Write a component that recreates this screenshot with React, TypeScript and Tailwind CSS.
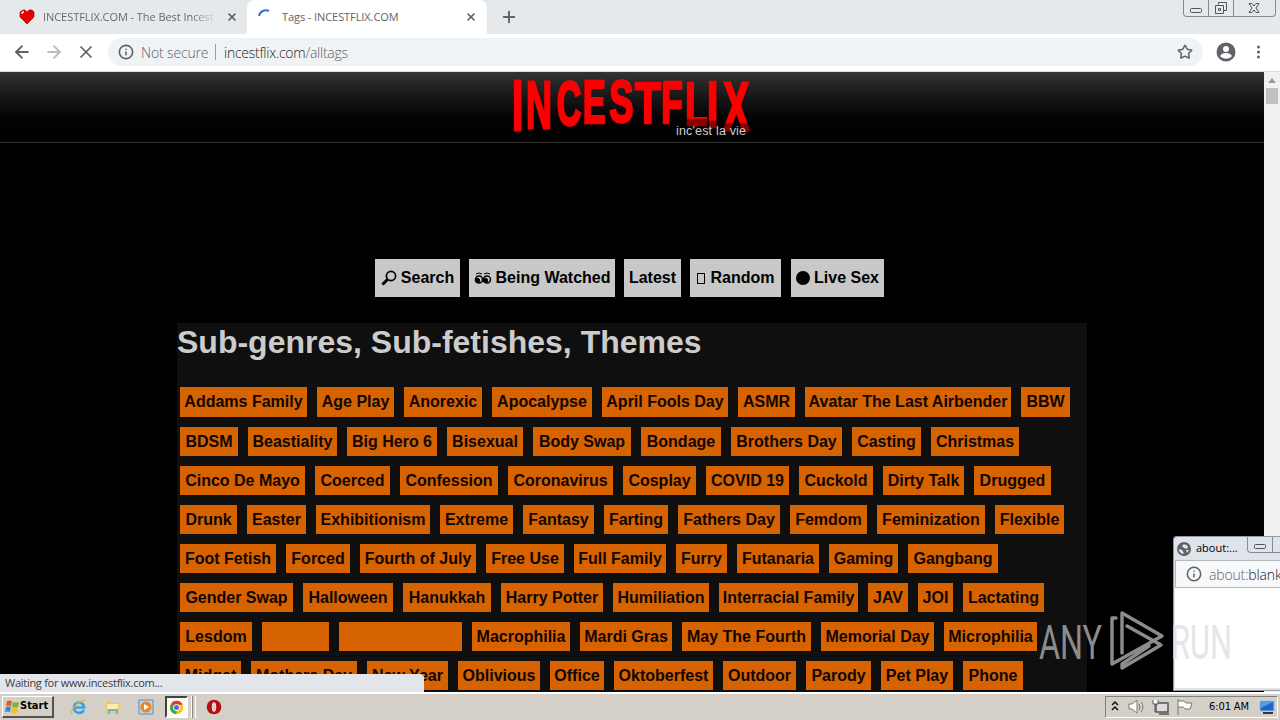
import type { ReactNode } from 'react';
import { ArrowLeft, ArrowRight, Info, Plus, Star, X } from 'lucide-react';
import { clsx } from 'clsx';

interface Tag {
  label: string;
  width: number;
}

const t = (label: string, width: number): Tag => ({ label, width });

const TAG_ROWS: Tag[][] = [
  [t('Addams Family', 127), t('Age Play', 77), t('Anorexic', 78), t('Apocalypse', 100), t('April Fools Day', 126), t('ASMR', 57), t('Avatar The Last Airbender', 206), t('BBW', 49)],
  [t('BDSM', 58), t('Beastiality', 89), t('Big Hero 6', 90), t('Bisexual', 76), t('Body Swap', 98), t('Bondage', 80), t('Brothers Day', 111), t('Casting', 69), t('Christmas', 88)],
  [t('Cinco De Mayo', 125), t('Coerced', 75), t('Confession', 98), t('Coronavirus', 105), t('Cosplay', 73), t('COVID 19', 83), t('Cuckold', 74), t('Dirty Talk', 81), t('Drugged', 77)],
  [t('Drunk', 57), t('Easter', 59), t('Exhibitionism', 114), t('Extreme', 73), t('Fantasy', 71), t('Farting', 64), t('Fathers Day', 102), t('Femdom', 77), t('Feminization', 108), t('Flexible', 69)],
  [t('Foot Fetish', 96), t('Forced', 64), t('Fourth of July', 116), t('Free Use', 78), t('Full Family', 92), t('Furry', 51), t('Futanaria', 82), t('Gaming', 69), t('Gangbang', 90)],
  [t('Gender Swap', 113), t('Halloween', 90), t('Hanukkah', 88), t('Harry Potter', 102), t('Humiliation', 96), t('Interracial Family', 139), t('JAV', 40), t('JOI', 35), t('Lactating', 81)],
  [t('Lesdom', 72), t('', 67), t('', 123), t('Macrophilia', 98), t('Mardi Gras', 92), t('May The Fourth', 129), t('Memorial Day', 113), t('Microphilia', 93)],
  [t('Midget', 61), t('Mothers Day', 106), t('New Year', 81), t('Oblivious', 82), t('Office', 54), t('Oktoberfest', 99), t('Outdoor', 73), t('Parody', 65), t('Pet Play', 72), t('Phone', 60)],
];

// x, baseline, horizontal scale, vertical scale
const LOGO: [string, number, number, number, number][] = [
  ['I', 512, 130, 0.68, 1.17],
  ['N', 526, 128, 0.6, 1.12],
  ['C', 556.5, 125, 0.56, 1.05],
  ['E', 582.5, 123, 0.57, 1.02],
  ['S', 609, 122, 0.6, 0.98],
  ['T', 635, 122.5, 0.7, 0.97],
  ['F', 661, 123, 0.58, 0.99],
  ['L', 685, 125, 0.6, 1.03],
  ['I', 707, 127, 0.68, 1.08],
  ['X', 723.5, 130, 0.64, 1.15],
];

function Heart() {
  return (
    <svg className="h-4 w-4 shrink-0" viewBox="0 0 16 16">
      <path d="M8 15 1 8V3l3-2h2l2 2 2-2h3l2 2v5z" fill="#e60000" stroke="#8b0000" strokeWidth=".6" />
      <path d="M3 5V4l1-1h1" fill="none" stroke="#fff" strokeWidth="1.3" />
    </svg>
  );
}

function TabStrip() {
  return (
    <div className="flex h-[34px] shrink-0 items-start bg-[#e5e9ec] text-[11px] text-[#5f6368]">
      <div className="flex h-full w-[247px] items-center pl-[19px]">
        <Heart />
        <span className="ml-2 w-[175px] overflow-hidden whitespace-nowrap bg-gradient-to-r from-[#5f6368] from-85% to-transparent bg-clip-text tracking-[-0.06px] text-transparent">
          INCESTFLIX.COM - The Best Incest P
        </span>
        <X className="ml-2 h-3 w-3" strokeWidth={3.4} />
      </div>
      <div className="flex h-full w-[240px] items-center rounded-t-lg bg-white pl-[11px]">
        <svg className="h-4 w-4" viewBox="0 0 16 16" fill="none" stroke="#3b6fc9" strokeWidth="2">
          <path d="M1 7a7 7 0 0 1 10-5" />
        </svg>
        <span className="ml-2 w-[183px] whitespace-nowrap tracking-[-0.08px]">Tags - INCESTFLIX.COM</span>
        <X className="h-3 w-3" strokeWidth={3.4} />
      </div>
      <Plus className="ml-[13px] mt-2 h-[18px] w-[18px]" strokeWidth={2.6} />
      <div className="ml-auto mr-1 flex h-[17px] w-[93px] rounded-b border border-t-0 border-[#858a90] text-[#50565c]">
        <WindowIcon className="w-[25px] border-r"><rect x="6.500" y="8.500" width="11" height="4" rx="1" /></WindowIcon>
        <WindowIcon className="w-[25px] border-r"><path d="M9.500 4.500v-2h8v8h-3M6.500 5.500h8v8h-8zM9.500 8.500h2v2h-2z" /></WindowIcon>
        <WindowIcon className="w-[41px]"><path d="M15 3.500h3l2 2.500 2-2.500h3L22 8l3 4.500h-3L20 10l-2 2.500h-3L18 8z" /></WindowIcon>
      </div>
    </div>
  );
}

function WindowIcon({ className, children }: { className: string; children: ReactNode }) {
  return (
    <div className={clsx('h-full overflow-hidden border-[#858a90]', className)}>
      <svg width="41" height="17" fill="none" stroke="currentColor">{children}</svg>
    </div>
  );
}

function Toolbar() {
  return (
    <div className="flex h-[38px] shrink-0 items-center border-b border-[#d8dadc] bg-white pb-px text-[#5f6368]">
      <ArrowLeft className="ml-3 h-5 w-5" strokeWidth={2.3} />
      <ArrowRight className="ml-3 h-5 w-5 text-[#babcbe]" strokeWidth={2.3} />
      <X className="ml-3 h-5 w-5" strokeWidth={2.1} />
      <div className="ml-3 flex h-7 w-[1095px] items-center rounded-full bg-[#f0f3f5] pl-2.5 text-[14px]">
        <Info className="h-4 w-4" strokeWidth={2.4} />
        <span className="ml-[7px] w-[67px] whitespace-nowrap font-light tracking-[-0.15px]">Not secure</span>
        <span className="ml-[7px] mr-2 h-4 w-px bg-[#9a9da0]" />
        <span className="whitespace-nowrap font-light tracking-[-0.26px]">
          <span className="text-[#202124]">incestflix.com</span>/alltags
        </span>
        <Star className="ml-auto mr-2.5 h-4 w-4" strokeWidth={2.3} />
      </div>
      <svg className="ml-[13px] h-5 w-5" viewBox="0 0 20 20">
        <circle cx="10" cy="10" r="9.500" fill="#5f6368" />
        <circle cx="10" cy="7" r="3" fill="#fff" />
        <path d="M4 14c2-4 10-4 12 0-3 3.600-9 3.600-12 0" fill="#fff" />
      </svg>
      <svg className="ml-[18px] h-4 w-[9px]" fill="#5f6368">
        <circle cx="4.500" cy="3" r="1.500" /><circle cx="4.500" cy="8" r="1.500" /><circle cx="4.500" cy="13" r="1.500" />
      </svg>
    </div>
  );
}

function SiteHeader() {
  return (
    <header className="h-[71px] border-b border-[#303030] bg-gradient-to-b from-[#333] to-black">
      <svg width="1264" height="70" viewBox="0 72 1264 70">
        <defs>
          <linearGradient id="logo" gradientUnits="userSpaceOnUse" x1="0" x2="0" y1="-44" y2="0">
            <stop offset="85%" stopColor="#fb0000" />
            <stop offset="88%" stopColor="#8b0000" />
          </linearGradient>
        </defs>
        <g fontFamily="Liberation Sans" fontWeight="700" fontSize="60" strokeWidth="2.500">
          {LOGO.map(([char, x, y, sx, sy], i) => {
            const paint = i > 6 ? 'url(#logo)' : '#fb0000';
            return (
              <text key={i} transform={`translate(${x} ${y}) scale(${sx} ${sy})`} fill={paint} stroke={paint}>
                {char}
              </text>
            );
          })}
        </g>
        <text x="676" y="135" textLength="70" fill="#ccc" fontFamily="Liberation Sans" fontSize="12.500">inc'est la vie</text>
      </svg>
    </header>
  );
}

function NavButton({ icon, label, className }: { icon?: ReactNode; label: string; className: string }) {
  return (
    <a className={clsx('flex h-[38px] items-center justify-center gap-1 whitespace-nowrap bg-[#c8c8c8] text-black', className)}>
      {icon}
      {label}
    </a>
  );
}

function SiteNav() {
  return (
    <nav className="ml-[375px] mt-[116px] flex font-bold">
      <NavButton
        className="w-[85px]"
        label="Search"
        icon={
          <svg width="16" height="16" fill="none" stroke="#000">
            <circle cx="10" cy="6" r="4.600" strokeWidth="1.700" /><path d="m7 9-5.500 5.500" strokeWidth="3" />
          </svg>
        }
      />
      <NavButton
        className="ml-[9px] w-[146px]"
        label="Being Watched"
        icon={
          <svg width="18" height="14" fill="none" stroke="#000">
            <path d="M2 3q3-2 6 0M10 3q3-2 6 0" />
            <ellipse cx="5" cy="8.500" rx="3.500" ry="3.500" strokeWidth="1.500" />
            <ellipse cx="13" cy="8.500" rx="3.500" ry="3.500" strokeWidth="1.500" />
            <circle cx="3.500" cy="9.500" r="2.200" fill="#000" /><circle cx="11.500" cy="9.500" r="2.200" fill="#000" />
          </svg>
        }
      />
      <NavButton className="ml-[9px] w-[57px]" label="Latest" />
      <NavButton
        className="ml-[9px] w-[91px]"
        label="Random"
        icon={<span className="mr-0.5 h-[11px] w-2 border border-black" />}
      />
      <NavButton
        className="ml-[10px] w-[93px]"
        label="Live Sex"
        icon={<span className="h-3.5 w-3.5 rounded-full bg-black" />}
      />
    </nav>
  );
}

function TagPanel() {
  return (
    <section className="ml-[177px] mt-[26px] h-[369px] w-[910px] overflow-hidden bg-[#0f0f0f]">
      <h1 className="h-16 whitespace-nowrap text-[32px] font-bold leading-[38px] text-[#ccc]">
        Sub-genres, Sub-fetishes, Themes
      </h1>
      <div className="flex flex-col gap-2.5 pl-[3px]">
        {TAG_ROWS.map((row, i) => (
          <div key={i} className={clsx('flex shrink-0 gap-2.5', i === 0 ? 'h-[30px]' : 'h-[29px]')}>
            {row.map((tag, j) => (
              <a
                key={j}
                className="flex shrink-0 items-center justify-center whitespace-nowrap bg-[#d66300] font-bold text-[#100500]"
                style={{ width: tag.width }}
              >
                {tag.label}
              </a>
            ))}
          </div>
        ))}
      </div>
    </section>
  );
}

function PopupWindow() {
  return (
    <div className="absolute left-[1173px] top-[536px] flex h-[155px] w-[107px] flex-col overflow-hidden rounded-tl border border-r-0 border-[#999] bg-[#dfe4ec] pl-px font-['Open_Sans',sans-serif] text-[11px]">
      <div className="flex h-[23px] shrink-0 items-center pl-0.5">
        <svg className="h-3.5 w-3.5" viewBox="0 0 14 14">
          <circle cx="7" cy="7" r="7" fill="#5f6368" />
          <path d="m2 7 3 1 2 3-2 1-3-3zm5-5 4 2-1 3-3-1-2-2zm2 6 3 0-2 3z" fill="#dfe4ec" />
        </svg>
        <span className="ml-[5px] text-black">about:...</span>
        <div className="ml-auto flex h-4 w-[33px] self-start rounded-bl border-b border-l border-[#858a90] text-[#50565c]">
          <WindowIcon className="w-[25px] border-r"><rect x="6.500" y="7.500" width="11" height="4" rx="1" /></WindowIcon>
        </div>
      </div>
      <div className="flex h-[28px] shrink-0 items-center border border-r-0 border-[#b5b8bc] bg-[#f7f8f9] pl-2.5 text-[#5f6368]">
        <Info className="h-4 w-4 shrink-0" strokeWidth={2.3} />
        <span className="ml-[7px] whitespace-nowrap text-[14px] font-light tracking-[-0.15px]">
          about:<span className="text-[#202124]">blank</span>
        </span>
      </div>
      <div className="mb-0.5 flex-1 bg-white" />
    </div>
  );
}

function Watermark() {
  return (
    <svg className="absolute left-[1035px] top-[606px]" width="202" height="70" viewBox="1035 606 202 70">
      <g fontFamily="Roboto" fontWeight="400" fontSize="49">
        <text x="1039" y="659" textLength="63" lengthAdjust="spacingAndGlyphs" fill="#8c8c8c">ANY</text>
        <text x="1171" y="659" textLength="61" lengthAdjust="spacingAndGlyphs" fill="#e6e6e6">RUN</text>
      </g>
      <g fill="none" stroke="#8c8c8c" strokeWidth="3.400" strokeLinecap="round" strokeLinejoin="round">
        <path d="M1122 653v-40l40 23M1116 618h-4v46l50-28M1127 626l34 19-39 23v-4l27-18" />
      </g>
    </svg>
  );
}

function Taskbar() {
  return (
    <div className="flex h-7 shrink-0 items-center border-t-2 border-white bg-[#d4d0c8] text-[11px] text-black">
      <div className="ml-0.5 flex h-[22px] w-[52px] items-center border-b-2 border-r-2 border-l border-t border-b-[#55524e] border-l-white border-r-[#55524e] border-t-white pl-px font-bold">
        <svg className="h-4 w-4 shrink-0" viewBox="0 0 16 16">
          <path d="M3 2q3-1 5 0L7 7q-3-1-5 0z" fill="#e75b24" />
          <path d="M9 3q3 1 6 0l-1 5q-3 1-6 0z" fill="#76b636" />
          <path d="M2 8q3-1 5 0l-1 5q-2-1-5 0z" fill="#3d85cf" />
          <path d="M8 9q3 1 6 0l-1 5q-3 1-6 0z" fill="#f5bd21" />
        </svg>
        Start
      </div>
      <svg className="ml-4" width="18" height="18" viewBox="0 0 18 18" fill="none">
        <path d="M14 12c-3 5-10 3-10-2.500C4 3 14 3 14 9.500H5" stroke="#3aa2df" strokeWidth="2.600" />
        <path d="M2 16C-1 11 14-1 16 3" stroke="#e4b43b" strokeWidth="1.300" />
      </svg>
      <svg className="ml-4" width="18" height="18" viewBox="0 0 18 18">
        <path d="M2 3h5l1 2h7v11H2z" fill="#edca60" /><path d="M3 6h11v5H3z" fill="#f8edae" />
        <path d="M4 16v-5h10v5h-2v-3H6v3z" fill="#6bb4df" />
      </svg>
      <svg className="ml-4" width="17" height="18" viewBox="0 0 17 18">
        <path d="M1 2h14v14H1z" fill="#b9d7ef" stroke="#5c8bb5" />
        <circle cx="8" cy="9" r="5.500" fill="#f08519" /><path d="m6 6 5 3-5 3z" fill="#fff" />
      </svg>
      <div className="ml-2.5 flex h-[22px] w-[23px] items-center justify-center border-2 border-b-white border-l-[#45423e] border-r-white border-t-[#45423e] bg-[#f8f8f6]">
        <svg width="15" height="15" viewBox="0 0 16 16">
          <circle cx="8" cy="8" r="7" fill="#fbc116" />
          <path d="M8 8 2 4.500A7 7 0 0 1 14.500 5H8z" fill="#e33b2e" />
          <path d="M8 8v7A7 7 0 0 1 2 4.500z" fill="#2da94f" />
          <circle cx="8" cy="8" r="3.600" fill="#fff" /><circle cx="8" cy="8" r="2.700" fill="#3b78e7" />
        </svg>
      </div>
      <span className="h-[22px] w-1 border-r border-white" />
      <span className="h-[22px] w-1 border-l border-r border-l-[#8b8780] border-r-white" />
      <svg className="ml-2.5" width="16" height="16" viewBox="0 0 16 16">
        <circle cx="8" cy="8" r="7.300" fill="#b60e15" />
        <ellipse cx="8" cy="8" rx="1.800" ry="4.500" fill="#d4d0c8" stroke="#f5dada" />
      </svg>
      <div className="ml-auto mr-0.5 flex h-[22px] w-[173px] items-center border border-b-white border-l-[#808080] border-r-white border-t-[#808080]">
        <svg width="98" height="20" viewBox="0 0 98 20" fill="none">
          <path d="m6 8 3-3 3 3m-6 5 3-3 3 3" stroke="#111" strokeWidth="1.500" />
          <path d="M23 7h3l5-4v13l-5-4h-3z" fill="#fff" stroke="#777" />
          <path d="M33 7q2 3 0 6m2-8q4 5 0 10" stroke="#777" />
          <path d="M50 6h12v9H50zM53 17h10" fill="#ddd" stroke="#555" strokeWidth="1.500" />
          <path d="M47 3v4h5V3m-3 4v8" fill="#fff" stroke="#555" />
          <path d="M72 2v16m0-14h6l2 2h6l-2 6h-5l-2-2h-5" fill="#fff" stroke="#777" />
        </svg>
        <span className="ml-[5px] w-[42px] whitespace-nowrap tracking-[-0.1px]">6:01 AM</span>
        <svg className="ml-2" width="16" height="16">
          <path d="M1 2h14v10H1z" fill="#1b65c4" stroke="#9fc4e8" /><path d="M2 3h12L2 9z" fill="#539be4" /><path d="M4 14h10" stroke="#334" strokeWidth="2" />
        </svg>
      </div>
    </div>
  );
}

export default function App() {
  return (
    <div className="relative flex h-[720px] w-[1280px] flex-col overflow-hidden bg-black font-['DejaVu_Sans_Condensed','Open_Sans',sans-serif]">
      <div className="flex shrink-0 flex-col font-['Open_Sans',sans-serif]">
        <TabStrip />
        <Toolbar />
      </div>
      <div className="flex min-h-0 flex-1">
        <main className="w-[1264px] shrink-0 overflow-hidden bg-black font-['Liberation_Sans',sans-serif] text-[16px]">
          <SiteHeader />
          <SiteNav />
          <TagPanel />
        </main>
        <div className="flex w-4 flex-col items-center bg-[#f1f1f1]">
          <svg width="16" height="16"><path d="m4 11 4-5 4 5z" fill="#999" /></svg>
          <div className="h-4 w-3 bg-[#c1c1c1]" />
        </div>
      </div>
      <Taskbar />
      <div className="absolute left-0 top-[674px] h-[18px] w-[424px] rounded-tr bg-[#e2e5ea] pl-[5px] font-['Open_Sans',sans-serif] text-[11px] leading-[18px] tracking-[-0.27px] text-[#3c4043]">
        Waiting for www.incestflix.com...
      </div>
      <PopupWindow />
      <Watermark />
    </div>
  );
}
